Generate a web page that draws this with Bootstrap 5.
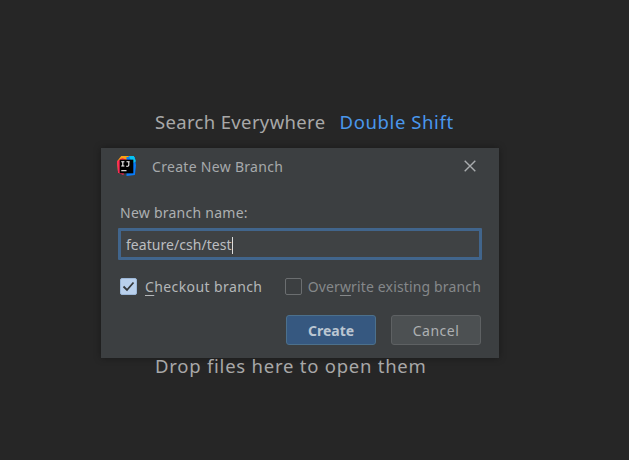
<!DOCTYPE html>
<html lang="en"><head><meta charset="utf-8"><title>Create New Branch</title>
<link rel="stylesheet" href="https://cdn.jsdelivr.net/npm/bootstrap@5.3.0/dist/css/bootstrap.min.css">
<style>
html,body{height:100%;}
body{background:#262626;font-family:"Noto Sans","Liberation Sans",sans-serif;font-size:14px;color:#bbb;overflow:hidden;}
.stage{width:629px;height:460px;padding-top:109px;padding-left:101px;}
.hint{font-size:18.5px;line-height:26px;color:#a8a8a8;margin-left:54px;white-space:nowrap;letter-spacing:.34px;}
.hint-top{height:39px;}
.hint-key{color:#4a97ec;margin-left:9px;letter-spacing:.6px;}
.hint-drop{margin-top:-5px;letter-spacing:.76px;}
.dlg{width:398px;height:210px;background:#3c3f41;box-shadow:0 0 7px rgba(0,0,0,.35);}
.dlg-title{height:38px;padding:0 23px 2px 15px;}
.dlg-name{font-size:14px;color:#a6a9ab;margin-left:15px;letter-spacing:.3px;}
.dlg-body{padding:17px 18px 0 19px;}
.fld-label{font-size:14px;line-height:20px;color:#adb0b2;margin-bottom:5px;letter-spacing:.25px;}
.fld{height:32px;margin:0 -1px 0 -2px;border:3px solid #41658c;border-radius:1px;background:#3f4244;padding-left:5px;color:#bcbec0;font-size:14px;line-height:27px;letter-spacing:.05px;}
.caret-bar{display:inline-block;width:1px;height:17px;background:#ddd;vertical-align:-4px;}
.opts{margin-top:16px;height:20px;}
.tick{width:17px;height:17px;border-radius:2px;background:#b9d0ec;border:1px solid #9db8d8;}
.untick{width:17px;height:17px;border-radius:2px;border:1.5px solid #6b6e70;margin-right:-1px;}
.opt{font-size:14px;color:#b4b7b9;margin-left:8px;letter-spacing:.4px;}
.opt-off{color:#85888a;margin-left:7px;letter-spacing:.15px;}
.opt u{text-underline-offset:3px;text-decoration-thickness:1px;}
.acts{margin-top:19px;}
.dbtn{width:90px;height:30px;border-radius:3px;font-size:14px;line-height:28px;padding:1px 0 0;text-align:center;}
.dbtn-pri{background:#365880;border:1px solid #4c708c;color:#bbc6d2;font-weight:700;}
.dbtn-sec{background:#4c5052;border:1px solid #5e6163;color:#aeb0b2;margin-left:15px;letter-spacing:.5px;}
</style></head>
<body>
<div class="stage">
  <div class="hint hint-top">Search Everywhere <span class="hint-key">Double Shift</span></div>
  <div class="dlg">
    <div class="dlg-title d-flex align-items-center">
      <svg width="21" height="21" viewBox="0 0 20 20" aria-label="IntelliJ IDEA logo">
        <path d="M1 5 5 0h7l1 3-7 14-4-1z" fill="#f9a012"/>
        <path d="M1 5 6 2l5 2-4 14-5-2z" fill="#fe2857"/>
        <path d="M10 1h8l1 8-1 9-8 1z" fill="#087cfa"/>
        <path d="M12 0h5l2 5-3 2z" fill="#07c3f2"/>
        <rect x="3.500" y="3.500" width="13" height="13" fill="#000"/>
        <path d="M5 5.500h3M6.500 5.500v4M5 9.500h3M10 5.500h3M12.200 5.500v3.300q0 .9-1 .9h-1.500" stroke="#fff" stroke-width="1" fill="none"/>
        <rect x="5" y="13.500" width="5" height="1" fill="#fff"/>
      </svg>
      <span class="dlg-name">Create New Branch</span>
      <svg class="ms-auto" width="12" height="12" viewBox="0 0 12 12" aria-label="Close"><path d="M.7.700 11.300 11.300M11.300.7.700 11.300" stroke="#a9acae" stroke-width="1.400"/></svg>
    </div>
    <div class="dlg-body">
      <div class="fld-label">New branch name:</div>
      <div class="fld">feature/csh/test<span class="caret-bar"></span></div>
      <div class="opts d-flex align-items-center">
        <span class="tick d-flex align-items-center justify-content-center">
          <svg width="13" height="11" viewBox="0 0 13 11"><path d="M1.500 5.500 5 9l6.500-7.500" stroke="#35393c" stroke-width="1.800" fill="none"/></svg>
        </span>
        <span class="opt"><u>C</u>heckout branch</span>
        <span class="untick ms-auto"></span>
        <span class="opt opt-off">Over<u>w</u>rite existing branch</span>
      </div>
      <div class="acts d-flex justify-content-end">
        <button type="button" class="btn dbtn dbtn-pri">Create</button>
        <button type="button" class="btn dbtn dbtn-sec">Cancel</button>
      </div>
    </div>
  </div>
  <div class="hint hint-drop">Drop files here to open them</div>
</div>
<script src="https://cdn.jsdelivr.net/npm/bootstrap@5.3.0/dist/js/bootstrap.bundle.min.js"></script>
</body></html>
